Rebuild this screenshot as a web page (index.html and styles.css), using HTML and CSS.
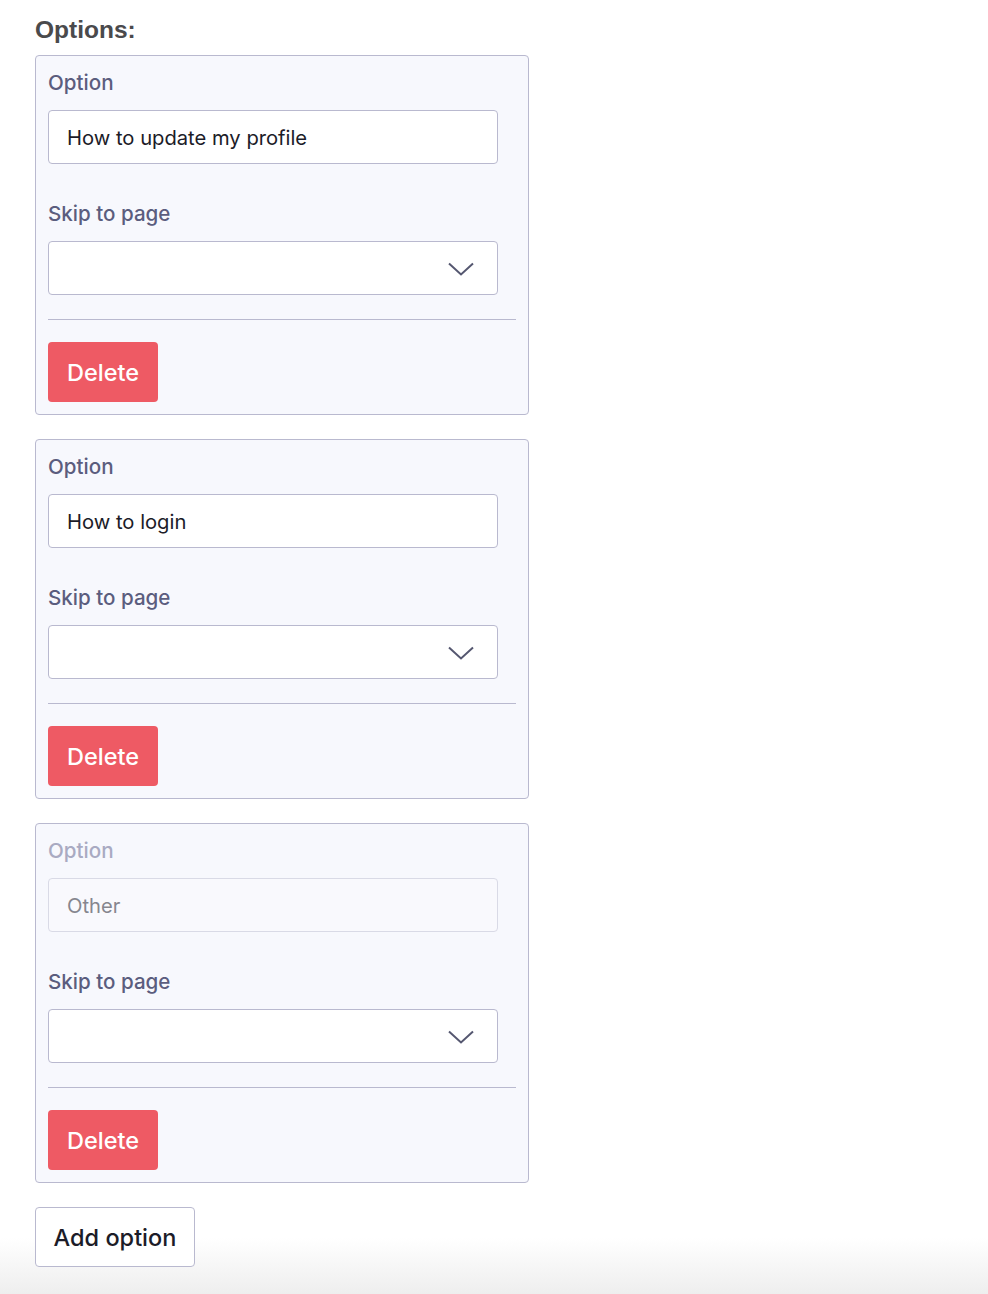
FILE: index.html
```html
<!DOCTYPE html>
<html lang="en">
<head>
<meta charset="utf-8">
<title>Options</title>
<link rel="stylesheet" href="styles.css">
</head>
<body>
<main class="options">
  <h2 class="options-title">Options:</h2>

  <section class="option-card">
    <label class="field-label">Option</label>
    <div class="text-input">How to update my profile</div>
    <label class="field-label skip-label">Skip to page</label>
    <div class="select-input">
      <svg class="chevron" viewBox="0 0 26 14" width="26" height="14"><path d="M1 1.5 L13 12.5 L25 1.5" fill="none" stroke="#555770" stroke-width="2"/></svg>
    </div>
    <hr class="divider">
    <button class="btn-delete">Delete</button>
  </section>

  <section class="option-card">
    <label class="field-label">Option</label>
    <div class="text-input">How to login</div>
    <label class="field-label skip-label">Skip to page</label>
    <div class="select-input">
      <svg class="chevron" viewBox="0 0 26 14" width="26" height="14"><path d="M1 1.5 L13 12.5 L25 1.5" fill="none" stroke="#555770" stroke-width="2"/></svg>
    </div>
    <hr class="divider">
    <button class="btn-delete">Delete</button>
  </section>

  <section class="option-card">
    <label class="field-label is-disabled">Option</label>
    <div class="text-input is-disabled">Other</div>
    <label class="field-label skip-label">Skip to page</label>
    <div class="select-input">
      <svg class="chevron" viewBox="0 0 26 14" width="26" height="14"><path d="M1 1.5 L13 12.5 L25 1.5" fill="none" stroke="#555770" stroke-width="2"/></svg>
    </div>
    <hr class="divider">
    <button class="btn-delete">Delete</button>
  </section>

  <button class="btn-add">Add option</button>
</main>
</body>
</html>
```

FILE: styles.css
```css
html {
  min-height: 100%;
  background: linear-gradient(to bottom, #ffffff 0, #ffffff calc(100% - 56px), #eeeeee 100%);
}
body {
  margin: 0;
  font-family: Inter, "Noto Sans", "Liberation Sans", sans-serif;
  color: #1c1c28;
}
.options {
  padding: 15px 0 0 35px;
  width: 494px;
  display: flex;
  flex-direction: column;
}
.options-title {
  margin: 0 0 10px 0;
  font-family: "Liberation Sans", Arial, sans-serif;
  font-size: 24.5px;
  line-height: 30px;
  font-weight: 700;
  color: #4a4a4c;
}
.option-card {
  box-sizing: border-box;
  width: 494px;
  background: #f7f8fd;
  border: 1px solid #b9b9cf;
  border-radius: 4px;
  padding: 12px;
  margin-bottom: 24px;
  display: flex;
  flex-direction: column;
  align-items: flex-start;
}
.field-label {
  font-size: 20.6px;
  line-height: 30px;
  font-weight: 450;
  color: #5b5d7e;
}
.field-label.is-disabled {
  color: #a9aac2;
}
.skip-label {
  margin-top: 35px;
}
.text-input,
.select-input {
  box-sizing: border-box;
  margin-top: 12px;
  width: 450px;
  height: 54px;
  background: #ffffff;
  border: 1px solid #b9b9cf;
  border-radius: 4px;
  padding: 0 18px;
  display: flex;
  align-items: center;
  font-size: 20.2px;
  color: #1c1c28;
}
.text-input.is-disabled {
  background: #f9f9fd;
  border-color: #d9dae6;
  color: #86868e;
}
.select-input {
  justify-content: flex-end;
  padding-right: 23px;
}
.chevron {
  display: block;
  margin-top: 1px;
}
.divider {
  align-self: stretch;
  margin: 24px 0 22px 0;
  border: 0;
  border-top: 1px solid #b9b9cf;
  height: 0;
}
.btn-delete {
  width: 110px;
  height: 60px;
  background: #ee5a64;
  border: 0;
  border-radius: 4px;
  color: #ffffff;
  font-family: inherit;
  font-size: 23.5px;
  font-weight: 500;
  padding: 0;
}
.btn-add {
  align-self: flex-start;
  box-sizing: border-box;
  width: 160px;
  height: 60px;
  background: #ffffff;
  border: 1px solid #b9b9cf;
  border-radius: 4px;
  font-family: inherit;
  font-size: 23.5px;
  font-weight: 500;
  color: #1c1c28;
  padding: 0;
}
```
